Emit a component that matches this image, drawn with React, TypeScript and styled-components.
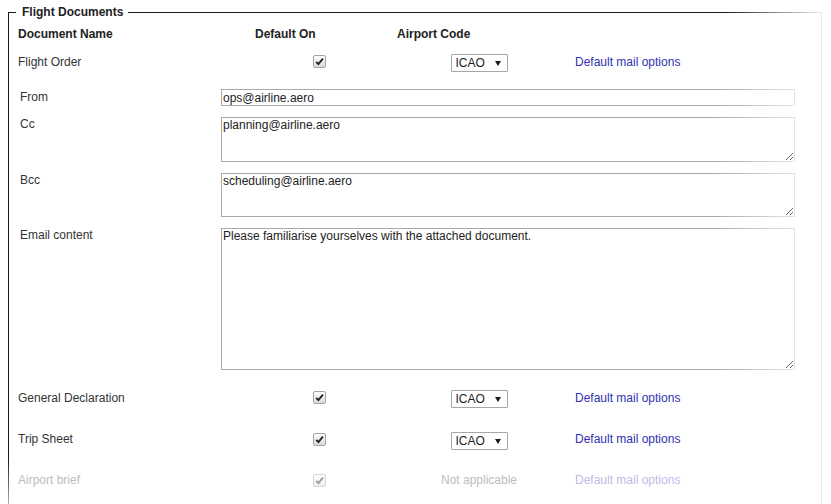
import styled, { createGlobalStyle } from "styled-components";

const GlobalStyle = createGlobalStyle`
  html, body {
    margin: 0;
    overflow: hidden;
    background: #fff;
  }
  body {
    font-family: "Liberation Sans", Arial, sans-serif;
    font-size: 12px;
    color: #333;
  }
`;

const Fieldset = styled.fieldset`
  margin: 5px 9px 0 8px;
  padding: 7px 9px 30px 9px;
  min-width: 0;
  border: 1px solid #222;
  border-image: linear-gradient(
      to bottom right,
      #1a1a1a 0%,
      #1a1a1a 44%,
      #e6e6e6 50%,
      #e6e6e6 100%
    )
    1;
`;

const Legend = styled.legend`
  margin-left: -2px;
  padding: 0 5px 0 6px;
  font-weight: bold;
  line-height: 14px;
  color: #222;
`;

const HeaderRow = styled.div`
  display: grid;
  grid-template-columns: 237px 142px 1fr;
  font-weight: bold;
  line-height: 16px;
  color: #222;
  margin-bottom: 9px;
`;

const DocRow = styled.div<{ $disabled?: boolean }>`
  display: grid;
  grid-template-columns: 203px 196px 124px 1fr;
  align-items: center;
  height: 20px;
  color: ${(p) => (p.$disabled ? "#bdbdbd" : "#333")};
`;

const DocList = styled.div`
  display: flex;
  flex-direction: column;
  gap: 21.5px;
`;

const Center = styled.div`
  justify-self: center;
  display: flex;
`;

const Box = styled.span<{ $disabled?: boolean }>`
  width: 13px;
  height: 13px;
  box-sizing: border-box;
  display: inline-flex;
  align-items: center;
  justify-content: center;
  border: 1px solid #a3a3a3;
  border-radius: 2px;
  background: linear-gradient(#fdfdfd, #dcdcdc);
  opacity: ${(p) => (p.$disabled ? 0.45 : 1)};
`;

const SelectWrap = styled.div`
  position: relative;
  margin-top: 3px;

  &::after {
    content: "";
    position: absolute;
    right: 7px;
    top: 7px;
    width: 0;
    height: 0;
    border-left: 3.5px solid transparent;
    border-right: 3.5px solid transparent;
    border-top: 5px solid #1a1a1a;
    pointer-events: none;
  }
`;

const Select = styled.select`
  appearance: none;
  width: 57px;
  height: 18px;
  box-sizing: border-box;
  margin: 0;
  padding: 0 0 0 4px;
  border: 1px solid #a6a6a6;
  border-radius: 1px;
  background: #fff;
  font-family: "Liberation Sans", Arial, sans-serif;
  font-size: 12px;
  color: #222;
  line-height: 16px;
`;

const NotApplicable = styled.span`
  justify-self: center;
  color: #bdbdbd;
`;

const MailLink = styled.a<{ $disabled?: boolean }>`
  padding-left: 34px;
  color: ${(p) => (p.$disabled ? "#bcbce6" : "#3030b0")};
  text-decoration: none;
  cursor: pointer;
`;

const MailBlock = styled.div`
  display: grid;
  grid-template-columns: 201px 574px;
  row-gap: 11px;
  margin: 18px 0 17px 2px;
`;

const FieldLabel = styled.label<{ $pad?: number }>`
  line-height: 14px;
  padding-top: ${(p) => p.$pad ?? 0}px;
`;

const TextInput = styled.input`
  height: 17px;
  box-sizing: border-box;
  margin: 0;
  padding: 0 1px;
  border: 1px solid #a9a9a9;
  border-image: linear-gradient(to right, #a9a9a9 86%, #e4e4e4) 1;
  font-family: "Liberation Sans", Arial, sans-serif;
  font-size: 12px;
  color: #222;
  outline: none;
`;

const TextArea = styled.textarea<{ $h: number }>`
  height: ${(p) => p.$h}px;
  box-sizing: border-box;
  margin: 0;
  padding: 0 1px;
  border: 1px solid #a9a9a9;
  border-image: linear-gradient(to right, #a9a9a9 86%, #e4e4e4) 1;
  font-family: "Liberation Sans", Arial, sans-serif;
  font-size: 12px;
  color: #222;
  outline: none;
  resize: both;
`;

function Check({ disabled }: { disabled?: boolean }) {
  return (
    <Box $disabled={disabled}>
      <svg width="9" height="9" viewBox="0 0 9 9">
        <path
          d="M1.2 4.8 L3.4 7 L7.9 1.6"
          fill="none"
          stroke="#222"
          strokeWidth="1.9"
        />
      </svg>
    </Box>
  );
}

type Doc = { name: string; disabled?: boolean };

function DocumentRow({ name, disabled }: Doc) {
  return (
    <DocRow $disabled={disabled}>
      <span>{name}</span>
      <Center>
        <Check disabled={disabled} />
      </Center>
      {disabled ? (
        <NotApplicable>Not applicable</NotApplicable>
      ) : (
        <Center>
          <SelectWrap>
            <Select defaultValue="ICAO">
              <option>ICAO</option>
              <option>IATA</option>
            </Select>
          </SelectWrap>
        </Center>
      )}
      <MailLink $disabled={disabled}>Default mail options</MailLink>
    </DocRow>
  );
}

const otherDocs: Doc[] = [
  { name: "General Declaration" },
  { name: "Trip Sheet" },
  { name: "Airport brief", disabled: true },
];

export default function App() {
  return (
    <>
      <GlobalStyle />
      <Fieldset>
        <Legend>Flight Documents</Legend>
        <HeaderRow>
          <span>Document Name</span>
          <span>Default On</span>
          <span>Airport Code</span>
        </HeaderRow>

        <DocumentRow name="Flight Order" />

        <MailBlock>
          <FieldLabel $pad={1}>From</FieldLabel>
          <TextInput defaultValue="ops@airline.aero" />
          <FieldLabel>Cc</FieldLabel>
          <TextArea $h={45} defaultValue="planning@airline.aero" />
          <FieldLabel>Bcc</FieldLabel>
          <TextArea $h={44} defaultValue="scheduling@airline.aero" />
          <FieldLabel>Email content</FieldLabel>
          <TextArea
            $h={142}
            defaultValue="Please familiarise yourselves with the attached document."
          />
        </MailBlock>

        <DocList>
          {otherDocs.map((d) => (
            <DocumentRow key={d.name} {...d} />
          ))}
        </DocList>
      </Fieldset>
    </>
  );
}
